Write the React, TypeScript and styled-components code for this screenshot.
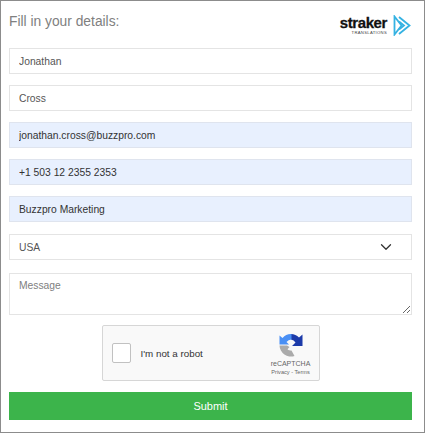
import React from 'react';
import styled, { createGlobalStyle } from 'styled-components';
import { ChevronDown } from 'lucide-react';

const GlobalStyle = createGlobalStyle`
  html, body {
    margin: 0;
    padding: 0;
    background: #fff;
  }
  * {
    box-sizing: border-box;
  }
`;

const Frame = styled.div`
  width: 425px;
  height: 433px;
  padding: 11px 12px 0 8px;
  border: 1.5px solid #8c8c8c;
  font-family: 'Liberation Sans', Arial, sans-serif;
  display: flex;
  flex-direction: column;
`;

const Header = styled.div`
  height: 36px;
  display: flex;
  justify-content: space-between;
  align-items: flex-start;
`;

const Title = styled.div`
  font-size: 13.8px;
  line-height: 20px;
  color: #808080;
`;

const Logo = styled.div`
  display: flex;
  align-items: center;
  gap: 6px;
  margin-top: 3px;
  margin-right: 1px;
`;

const LogoWords = styled.div`
  display: flex;
  flex-direction: column;
  align-items: flex-end;
`;

const LogoName = styled.div`
  font-size: 15px;
  font-weight: 700;
  line-height: 13px;
  letter-spacing: -0.4px;
  color: #111;
  -webkit-text-stroke: 0.3px #111;
`;

const LogoSub = styled.div`
  font-size: 4.2px;
  line-height: 7px;
  letter-spacing: 0.3px;
  color: #444;
`;

const Fields = styled.div`
  display: flex;
  flex-direction: column;
  gap: 11px;
`;

const Input = styled.input<{ $filled?: boolean }>`
  width: 100%;
  height: 26px;
  padding: 0 9px;
  font: 10.3px 'Liberation Sans', Arial, sans-serif;
  color: ${(p) => (p.$filled ? '#333' : '#555')};
  outline: none;
  border: 1.5px solid ${(p) => (p.$filled ? '#dfe4ee' : '#e4e4e4')};
  background: ${(p) => (p.$filled ? '#e8f0fe' : '#fff')};
`;

const SelectBox = styled.div`
  height: 26px;
  margin-top: 1px;
  padding: 0 16px 0 9px;
  display: flex;
  align-items: center;
  justify-content: space-between;
  font-size: 10.3px;
  color: #555;
  border: 1.5px solid #e4e4e4;
  background: #fff;
`;

const Message = styled.textarea`
  display: block;
  width: 100%;
  height: 42px;
  margin-top: 2px;
  padding: 6px 9px;
  font: 10.3px 'Liberation Sans', Arial, sans-serif;
  color: #444;
  outline: none;
  border: 1.5px solid #e4e4e4;
  &::placeholder {
    color: #808080;
  }
`;

const Captcha = styled.div`
  width: 218px;
  height: 56px;
  margin: 10px auto 0;
  padding: 0 6px 0 9px;
  display: flex;
  align-items: center;
  background: #f9f9f9;
  border: 1px solid #d6d6d6;
  border-radius: 2px;
`;

const CheckBox = styled.div`
  width: 19px;
  height: 20px;
  background: #fff;
  border: 1.5px solid #c1c1c1;
  border-radius: 2px;
`;

const CaptchaLabel = styled.div`
  margin-left: 10px;
  flex: 1;
  font-size: 9.8px;
  color: #333;
`;

const CaptchaBrand = styled.div`
  width: 44px;
  padding-top: 4px;
  display: flex;
  flex-direction: column;
  align-items: center;
  color: #666;
`;

const BrandName = styled.div`
  font-size: 7px;
  line-height: 9px;
  margin-top: 2px;
`;

const BrandLinks = styled.div`
  font-size: 5.6px;
  line-height: 9px;
  white-space: nowrap;
`;

const Submit = styled.button`
  height: 28px;
  margin-top: 11px;
  border: 0;
  background: #3cb44b;
  color: #fff;
  font: 11px 'Liberation Sans', Arial, sans-serif;
`;

const StrakerMark = () => (
  <svg width="18" height="21" viewBox="0 0 18 21" fill="none" stroke="#35b2e2" strokeWidth="1.8">
    <path d="M1.5 1.5v18l7-9z" />
    <path d="M6 2l10.5 8.5L6 19" />
    <path d="M6 6.5l5 4-5 4" />
  </svg>
);

const RecaptchaMark = () => (
  <svg width="24" height="24" viewBox="0 0 24 24">
    <path d="M12 1a11 11 0 0 1 8 3.5L23.5 1.5V13H13l3.5-3.5A6 6 0 0 0 12 6.5z" fill="#1c3aa9" />
    <path d="M12.5 1A11 11 0 0 0 3.5 5L.5 2.5V11.5H10L7.5 9A6 6 0 0 1 12.5 6.5z" fill="#4a90f5" />
    <path d="M.5 12.5h7.5l2.5 1.5-2 2.2c1.2 1 2.5 1.3 4 1.3l3 5.5A11.5 11.5 0 0 1 .5 12.5z" fill="#ababab" />
  </svg>
);

const App = () => {
  return (
    <>
      <GlobalStyle />
      <Frame>
        <Header>
          <Title>Fill in your details:</Title>
          <Logo>
            <LogoWords>
              <LogoName>straker</LogoName>
              <LogoSub>TRANSLATIONS</LogoSub>
            </LogoWords>
            <StrakerMark />
          </Logo>
        </Header>
        <Fields>
          <Input readOnly value="Jonathan" />
          <Input readOnly value="Cross" />
          <Input $filled readOnly value="jonathan.cross@buzzpro.com" />
          <Input $filled readOnly value="+1 503 12 2355 2353" />
          <Input $filled readOnly value="Buzzpro Marketing" />
          <SelectBox>
            USA
            <ChevronDown size={18} strokeWidth={1.7} color="#333" />
          </SelectBox>
          <Message placeholder="Message" />
        </Fields>
        <Captcha>
          <CheckBox />
          <CaptchaLabel>I'm not a robot</CaptchaLabel>
          <CaptchaBrand>
            <RecaptchaMark />
            <BrandName>reCAPTCHA</BrandName>
            <BrandLinks>Privacy - Terms</BrandLinks>
          </CaptchaBrand>
        </Captcha>
        <Submit type="button">Submit</Submit>
      </Frame>
    </>
  );
};

export default App;
